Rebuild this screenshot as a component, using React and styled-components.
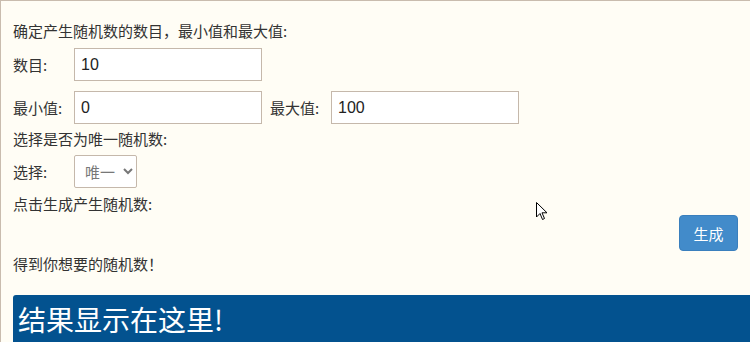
import React from "react";
import styled, { createGlobalStyle } from "styled-components";

const GlobalStyle = createGlobalStyle`
  html, body {
    margin: 0;
    padding: 0;
    overflow: hidden;
    background: #fffdf5;
  }
  body {
    font-family: "Noto Sans CJK SC", "Noto Sans", sans-serif;
  }
`;

const Panel = styled.div`
  position: relative;
  width: 780px;
  height: 342px;
  overflow: hidden;
  box-sizing: border-box;
  border-top: 1px solid #c9bcae;
  border-left: 1px solid #c9bcae;
  background: #fffdf5;
  padding: 20px 0 0 12px;
  color: #333;
  font-size: 15px;
`;

const Note = styled.div`
  line-height: 20px;
  height: 20px;
  margin-top: ${p => p.$top || 0}px;
  margin-bottom: ${p => p.$gap || 0}px;
`;

const Row = styled.div`
  display: flex;
  align-items: center;
  height: 33px;
  margin-bottom: ${p => p.$gap || 0}px;
`;

const Label = styled.span`
  width: ${p => p.$w || 61}px;
  flex: none;
  white-space: nowrap;
`;

const Input = styled.input`
  box-sizing: border-box;
  width: 188px;
  height: 33px;
  border: 1px solid #c5b8ab;
  background: #fff;
  padding: 0 6px;
  font-family: "Liberation Sans", Arial, sans-serif;
  font-size: 16px;
  color: #222;
  margin-right: ${p => p.$mr || 0}px;
  outline: none;
`;

const Select = styled.select`
  box-sizing: border-box;
  width: 63px;
  height: 33px;
  border: 1px solid #c5b8ab;
  background: #fff;
  padding: 0 2px 0 6px;
  font-family: "Noto Sans CJK SC", sans-serif;
  font-size: 15px;
  color: #777;
  border-radius: 2px;
`;

const ButtonRow = styled.div`
  display: flex;
  justify-content: flex-end;
  width: 725px;
  margin-top: 1px;
`;

const Button = styled.button`
  width: 59px;
  height: 36px;
  border: 1px solid #3a7fbd;
  border-radius: 4px;
  background: #428bca;
  color: #fff;
  font-family: "Noto Sans CJK SC", sans-serif;
  font-size: 15px;
  padding: 0;
`;

const Result = styled.div`
  margin-top: 21px;
  background: #03528f;
  color: #fff;
  height: 60px;
  padding: 2px 0 0 5px;
  font-size: 28px;
  line-height: 44px;
  border-radius: 3px 0 0 0;
`;

const Cursor = styled.svg`
  position: absolute;
  left: 535px;
  top: 201px;
`;

export default function App() {
  return (
    <>
      <GlobalStyle />
      <Panel>
        <Note $gap={7}>确定产生随机数的数目，最小值和最大值:</Note>
        <Row $gap={10}>
          <Label>数目:</Label>
          <Input defaultValue="10" />
        </Row>
        <Row $gap={5}>
          <Label>最小值:</Label>
          <Input defaultValue="0" $mr={8} />
          <Label>最大值:</Label>
          <Input defaultValue="100" />
        </Row>
        <Note $gap={6}>选择是否为唯一随机数:</Note>
        <Row $gap={6}>
          <Label>选择:</Label>
          <Select defaultValue="唯一">
            <option>唯一</option>
            <option>不唯一</option>
          </Select>
        </Row>
        <Note>点击生成产生随机数:</Note>
        <ButtonRow>
          <Button>生成</Button>
        </ButtonRow>
        <Note $top={3}>得到你想要的随机数！</Note>
        <Result>结果显示在这里!</Result>
        <Cursor width="12" height="19" viewBox="0 0 12 19">
          <path
            d="M0.5 0.5 L0.5 15 L4 11.5 L6.5 17.5 L8.5 16.5 L6 10.8 L11 10.8 Z"
            fill="#fff"
            stroke="#000"
            strokeWidth="1"
            strokeLinejoin="round"
          />
        </Cursor>
      </Panel>
    </>
  );
}
